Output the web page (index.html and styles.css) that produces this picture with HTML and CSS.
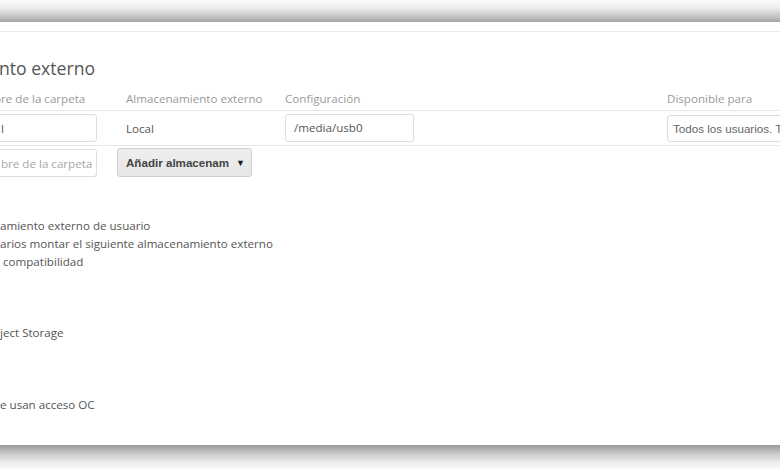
FILE: index.html
```html
<!DOCTYPE html>
<html lang="es">
<head>
<meta charset="utf-8">
<title>Almacenamiento externo</title>
<link rel="stylesheet" href="styles.css">
</head>
<body>
<div class="shadow-top"></div>
<main class="page">
  <h2 class="title">nto externo</h2>
  <div class="table">
    <div class="row head">
      <div class="cell first">bre de la carpeta</div>
      <div class="cell">Almacenamiento externo</div>
      <div class="cell">Configuración</div>
      <div class="cell">Disponible para</div>
    </div>
    <div class="row r1">
      <div class="cell"><div class="field f-left">l</div></div>
      <div class="cell">Local</div>
      <div class="cell"><div class="field f-conf">/media/usb0</div></div>
      <div class="cell"><div class="field f-avail">Todos los usuarios. Todos</div></div>
    </div>
    <div class="row r2">
      <div class="cell"><div class="field f-left ph">bre de la carpeta</div></div>
      <div class="cell"><div class="select"><span class="sel-text">Añadir almacenamiento</span><span class="arrow">▼</span></div></div>
    </div>
  </div>
  <div class="opts">
    <p class="line">amiento externo de usuario</p>
    <p class="line">arios montar el siguiente almacenamiento externo</p>
    <p class="line indent">compatibilidad</p>
  </div>
  <p class="line gap1">ject Storage</p>
  <p class="line gap2">e usan acceso OC</p>
</main>
<div class="shadow-bottom"></div>
</body>
</html>
```

FILE: styles.css
```css
html, body {
  margin: 0;
  padding: 0;
  background: #ffffff;
}
body {
  width: 780px;
  height: 470px;
  overflow: hidden;
  font-family: "Open Sans", "Liberation Sans", sans-serif;
  color: #555555;
}
.shadow-top {
  height: 22px;
  background: linear-gradient(#fafafa 0%, #ededed 35%, #c4c4c4 75%, #a2a2a2 100%);
}
.page {
  margin-top: 9px;
  border-top: 1px solid #ebebeb;
  height: 414px;
  overflow: hidden;
  box-sizing: border-box;
}
.title {
  margin: 0 0 0 -1px;
  padding-top: 24px;
  font-size: 17.6px;
  line-height: 24px;
  font-weight: 400;
  color: #555555;
}
.table {
  margin-top: 6px;
}
.row {
  display: grid;
  grid-template-columns: 126px 159px 382px 1fr;
  align-items: center;
  border-bottom: 1px solid #e6e6e6;
  font-size: 11.6px;
}
.row.r2 {
  border-bottom: none;
  align-items: start;
  height: 34px;
}
.head {
  height: 24px;
  color: #9a9a9a;
}
.head .first {
  margin-left: -6px;
}
.r1 {
  height: 34px;
}
.cell {
  white-space: nowrap;
  min-width: 0;
}
.field {
  box-sizing: border-box;
  height: 28px;
  border: 1px solid #dddddd;
  border-radius: 3px;
  background: #ffffff;
  display: flex;
  align-items: center;
  overflow: hidden;
  white-space: nowrap;
  color: #555555;
}
.f-left {
  margin-left: -30px;
  width: 127px;
  padding-left: 30px;
  padding-right: 6px;
}
.r2 .f-left {
  margin-top: 3px;
}
.ph {
  color: #a8a8a8;
}
.f-conf {
  width: 129px;
  padding-left: 8px;
  margin-top: -1px;
}
.f-avail {
  width: 160px;
  height: 27px;
  padding-left: 5px;
  font-family: "Liberation Sans", Arial, sans-serif;
  color: #666666;
}
.select {
  box-sizing: border-box;
  margin-left: -9px;
  margin-top: 2px;
  width: 135px;
  height: 29px;
  border: 1px solid #cfcfcf;
  border-radius: 3px;
  background: linear-gradient(#eeeeee, #e6e6e6);
  display: flex;
  align-items: center;
  padding: 0 5px 0 8px;
  font-family: "Liberation Sans", Arial, sans-serif;
  font-weight: 700;
  font-size: 11.6px;
  color: #444444;
}
.sel-text {
  width: 103px;
  overflow: hidden;
  white-space: nowrap;
}
.arrow {
  margin-left: auto;
  margin-right: 1px;
  font-size: 9px;
  color: #1e1e1e;
}
.opts {
  margin-top: 37px;
}
.line {
  margin: 0;
  font-size: 11.6px;
  line-height: 18px;
  color: #555555;
  white-space: nowrap;
}
.indent {
  padding-left: 3px;
}
.gap1 {
  margin-top: 53px;
}
.gap2 {
  margin-top: 54px;
}
.shadow-bottom {
  height: 24px;
  background: linear-gradient(#9a9a9a 0%, #c8c8c8 35%, #ebebeb 70%, #f8f8f8 100%);
}
```
